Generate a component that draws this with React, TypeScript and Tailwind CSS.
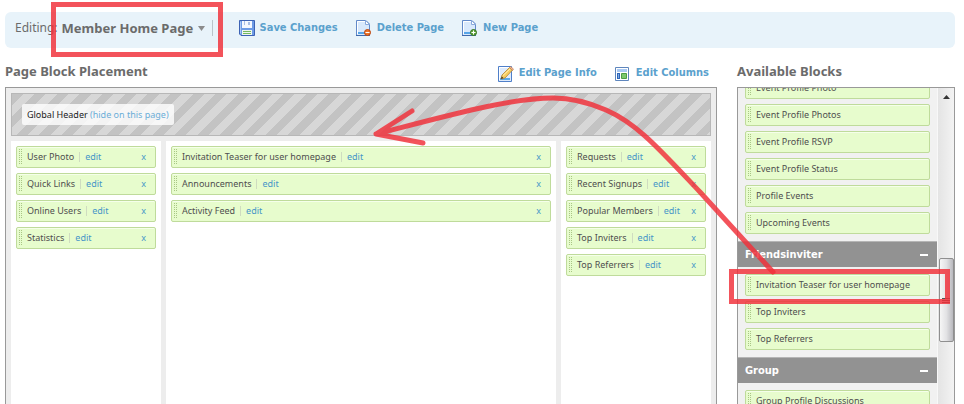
import { useLayoutEffect, useRef, type ReactNode } from "react";

const leftBlocks = ["User Photo", "Quick Links", "Online Users", "Statistics"];
const middleBlocks = ["Invitation Teaser for user homepage", "Announcements", "Activity Feed"];
const rightBlocks = ["Requests", "Recent Signups", "Popular Members", "Top Inviters", "Top Referrers"];

const sections = [
  {
    title: "",
    blocks: [
      "Event Profile Photo",
      "Event Profile Photos",
      "Event Profile RSVP",
      "Event Profile Status",
      "Profile Events",
      "Upcoming Events",
    ],
  },
  { title: "Friendsinviter", blocks: ["Invitation Teaser for user homepage", "Top Inviters", "Top Referrers"] },
  { title: "Group", blocks: ["Group Profile Discussions"] },
];

function SaveIcon() {
  return (
    <svg width="16" height="16" viewBox="0 0 16 16" aria-hidden="true">
      <path d="M.5 .5h15v15H2L.5 14z" fill="#6d9be6" stroke="#3c62b4" />
      <path d="M3 1h10v7H3z" fill="#f4f8ff" />
      <path d="M5 1h1v4H5zM9 2h2v3H9z" fill="#a9bfe6" />
      <path d="M3 10h10v5H3z" fill="#eef5ef" />
      <path d="M4 11h8v1H4zM4 13h8v1H4z" fill="#73b95e" />
      <path d="M1.500 1.500v12" stroke="#a9c8f7" />
    </svg>
  );
}

function PageShape() {
  return (
    <>
      <path d="M.5 .5h9.500l3.500 3.500v11.500H.5z" fill="#d9e9fc" stroke="#6289c9" />
      <path d="M1.500 14V1.500h8" fill="none" stroke="#ffffff" />
      <path d="M9.500 .5v4h4z" fill="#ffffff" stroke="#8aa9dc" />
      <path d="M2 12h7v2H2z" fill="#57a5e8" />
      <path d="M0 15.500h14" stroke="#3f69ab" />
    </>
  );
}

function DeletePageIcon() {
  return (
    <svg width="16" height="16" viewBox="0 0 16 16" aria-hidden="true">
      <PageShape />
      <circle cx="11.500" cy="12.500" r="3" fill="#ee7528" stroke="#bb4510" />
      <path d="M9.500 12.500h4" stroke="#ffffff" />
    </svg>
  );
}

function NewPageIcon() {
  return (
    <svg width="16" height="16" viewBox="0 0 16 16" aria-hidden="true">
      <PageShape />
      <circle cx="11.500" cy="12.500" r="3" fill="#63a63c" stroke="#35751f" />
      <path d="M9.500 12.500h4M11.500 10.500v4" stroke="#ffffff" />
    </svg>
  );
}

function EditPageIcon() {
  return (
    <svg width="16" height="16" viewBox="0 0 16 16" aria-hidden="true">
      <path d="M.5 .5h13v15H.5z" fill="#deebfc" stroke="#4f7fc9" />
      <path d="M1.500 14V1.500h11" fill="none" stroke="#ffffff" />
      <path d="M2 12h10v2H2z" fill="#5aa9e9" />
      <path d="M3 13l1-4 7.500-7.500 3 2.500L7 12z" fill="#f7cd62" stroke="#b08332" strokeWidth=".8" />
      <path d="M5 9.500L12 3" stroke="#fff0b4" />
      <path d="M11.500 1.500l1-1 3 2.500-1 1.500z" fill="#f3b58b" stroke="#b67a55" strokeWidth=".6" />
      <path d="M3 13l.7-2.500L5.500 12z" fill="#39322b" />
    </svg>
  );
}

function ColumnsIcon() {
  return (
    <svg width="16" height="16" viewBox="0 -1 16 16" aria-hidden="true">
      <path d="M.5 .5h13v13H.5z" fill="#ffffff" stroke="#5f86bd" />
      <path d="M2 2h10v3H2z" fill="#a9c9f3" />
      <path d="M2 6h3v6H2z" fill="#2f66b8" />
      <path d="M3 7h1v4H3z" fill="#79a8e4" />
      <path d="M6.500 6.500h5v5h-5z" fill="#7cc86c" stroke="#4c9d43" />
    </svg>
  );
}

function ToolButton({ icon, children }: { icon: ReactNode; children: ReactNode }) {
  return (
    <button
      type="button"
      className="flex items-center gap-[5px] font-['DejaVu_Sans_Condensed',sans-serif] text-[11px] font-bold whitespace-nowrap text-[#5ba1cd]"
    >
      {icon}
      {children}
    </button>
  );
}

function Grip() {
  return (
    <span className="h-4 w-[3px] shrink-0 bg-[conic-gradient(transparent_75%,#a9c685_0)] bg-[length:2px_2px]" />
  );
}

const blockShell =
  "flex h-[22px] items-center gap-[5px] rounded-xs border border-[#bfdb9b] bg-[#e7fccd] pl-[2px] text-[9px] text-[#4f4f4f] whitespace-nowrap shadow-[inset_0_1px_0_#f5ffea]";

function PlacedBlock({ name }: { name: string }) {
  return (
    <li className={blockShell}>
      <Grip />
      <span>{name}</span>
      <span className="h-[10px] w-px bg-[#cfdcc0]" />
      <a href="#edit" className="text-[#4695c8]">edit</a>
      <button type="button" aria-label={`Remove ${name}`} className="mr-[9px] ml-auto text-[#4695c8]">x</button>
    </li>
  );
}

function Column({ blocks }: { blocks: string[] }) {
  return (
    <ul className="flex flex-col gap-[5px] bg-white p-[5px]">
      {blocks.map((name) => (
        <PlacedBlock key={name} name={name} />
      ))}
    </ul>
  );
}

function AvailableBlocks() {
  const list = useRef<HTMLDivElement>(null);
  useLayoutEffect(() => {
    if (list.current) list.current.scrollTop = 18;
  }, []);

  return (
    <div className="flex min-h-0 flex-1 border border-b-0 border-[#999999] bg-[#f1f1f1]">
      <div ref={list} className="min-w-0 flex-1 overflow-hidden">
        {sections.map((section) => (
          <section key={section.title}>
            {section.title && (
              <h3 className="flex h-[26px] items-center justify-between border-t border-[#b5b5b5] bg-[#929292] pt-px pr-[9px] pl-[7px] font-['DejaVu_Sans_Condensed',sans-serif] text-[11px] font-bold text-white">
                {section.title}
                <button type="button" aria-label={`Collapse ${section.title}`} className="h-[2px] w-2 bg-white" />
              </h3>
            )}
            <ul className="flex flex-col gap-[5px] p-[7px]">
              {section.blocks.map((name) => (
                <li key={name} className={blockShell}>
                  <Grip />
                  <span>{name}</span>
                </li>
              ))}
            </ul>
          </section>
        ))}
      </div>
      <div className="flex w-[17px] shrink-0 flex-col items-center border-l border-[#f8f8f8] bg-linear-to-r from-[#e4e4e4] to-[#f3f3f3]">
        <button type="button" aria-label="Scroll up" className="flex h-[17px] w-full items-center justify-center">
          <svg width="7" height="4" viewBox="0 0 7 4" aria-hidden="true">
            <path d="M3.500 0L7 4H0z" fill="#333333" />
          </svg>
        </button>
        <div className="mt-[153px] flex h-[84px] w-[15px] flex-col items-center justify-center gap-px rounded-xs border border-[#8f8f8f] bg-linear-to-r from-[#f6f6f6] via-[#e2e2e4] to-[#b9b9be]">
          <span className="h-px w-2 bg-[#555555]" />
          <span className="h-px w-2 bg-[#555555]" />
          <span className="h-px w-2 bg-[#555555]" />
        </div>
      </div>
    </div>
  );
}

export default function App() {
  return (
    <div className="relative flex h-screen flex-col overflow-hidden bg-white pt-3 pr-[9px] pl-[5px] font-['Noto_Sans',sans-serif]">
      <header className="flex h-9 shrink-0 items-center rounded-md bg-[#e8f3fa] pb-1 pl-[10px] text-[#6b6b6b]">
        <label htmlFor="page" className="text-xs">Editing:</label>
        <div className="ml-1 flex items-center border-r border-[#b9c3c9] pr-[7px]">
          <select id="page" className="appearance-none bg-transparent text-[13px] leading-4 font-bold outline-none">
            <option>Member Home Page</option>
          </select>
          <svg className="ml-1" width="7" height="5" viewBox="0 0 7 5" aria-hidden="true">
            <path d="M0 0h7L3.500 5z" fill="#8b8b8b" />
          </svg>
        </div>
        <div className="ml-[26px] flex gap-[18px]">
          <ToolButton icon={<SaveIcon />}>Save Changes</ToolButton>
          <ToolButton icon={<DeletePageIcon />}>Delete Page</ToolButton>
          <ToolButton icon={<NewPageIcon />}>New Page</ToolButton>
        </div>
      </header>

      <div className="mt-3 flex min-h-0 flex-1 gap-5">
        <main className="flex min-w-0 flex-1 flex-col">
          <div className="flex h-[27px] shrink-0 items-center justify-between pr-2 pb-1">
            <h2 className="text-[13px] font-bold text-[#6b6b6b]">Page Block Placement</h2>
            <div className="flex gap-[18px] pt-1">
              <ToolButton icon={<EditPageIcon />}>Edit Page Info</ToolButton>
              <ToolButton icon={<ColumnsIcon />}>Edit Columns</ToolButton>
            </div>
          </div>
          <div className="flex min-h-0 flex-1 flex-col gap-[5px] border border-b-0 border-[#999999] bg-[#ededed] px-[5px] pt-[5px]">
            <div className="flex h-[43px] shrink-0 items-center border border-[#b7b7b7] bg-[repeating-linear-gradient(135deg,#c3c3c3_0_8px,#d7d7d7_8px_16px)] px-[10px]">
              <p className="rounded-xs bg-white/80 px-[5px] py-[3px] text-[9px] leading-[15px] text-[#222222]">
                Global Header <a href="#hide" className="text-[#6caed8]">(hide on this page)</a>
              </p>
            </div>
            <div className="grid min-h-0 flex-1 grid-cols-[150px_1fr_150px] gap-[5px]">
              <Column blocks={leftBlocks} />
              <Column blocks={middleBlocks} />
              <Column blocks={rightBlocks} />
            </div>
          </div>
        </main>

        <aside className="flex w-[218px] shrink-0 flex-col">
          <h2 className="flex h-[27px] shrink-0 items-center pb-1 text-[13px] font-bold text-[#6b6b6b]">Available Blocks</h2>
          <AvailableBlocks />
        </aside>
      </div>

      {/* Hand-drawn markup over the editor */}
      <svg className="pointer-events-none absolute top-0 left-0" width="964" height="404" viewBox="0 0 964 404" fill="none" stroke="#f1303a" strokeOpacity=".83" strokeWidth="5" aria-hidden="true">
        <path d="M53.500 4.500h167v50h-167z" />
        <path d="M731.500 271.500h216v30h-216z" />
        <path d="M773 272L700 192C660 150 638 124 606 110C590 103 574 98 553 98C510 98 450 115 376 134M412 111L376 134L423 143" strokeLinecap="round" strokeLinejoin="round" />
      </svg>
    </div>
  );
}
